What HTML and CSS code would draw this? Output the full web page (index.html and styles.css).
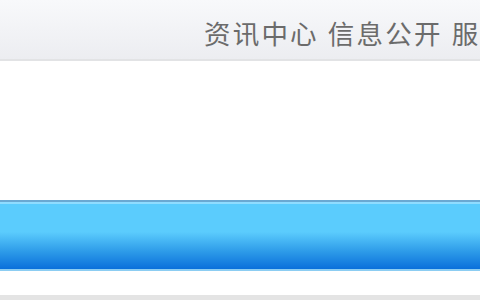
FILE: index.html
```html
<!DOCTYPE html>
<html lang="zh">
<head>
<meta charset="utf-8">
<link rel="stylesheet" href="styles.css">
</head>
<body>
<div class="page">
  <header class="top">
    <nav class="nav">
      <a class="nav-item">资讯中心</a>
      <a class="nav-item">信息公开</a>
      <a class="nav-item">服务大厅</a>
    </nav>
  </header>
  <div class="blank"></div>
  <div class="bluebar"></div>
  <div class="gap"></div>
  <div class="bottom"></div>
</div>
</body>
</html>
```
FILE: styles.css
```css
html, body {
  margin: 0;
  padding: 0;
  background: #ffffff;
  width: 480px;
  height: 300px;
  overflow: hidden;
}
.page {
  width: 480px;
  display: flex;
  flex-direction: column;
}
.top {
  height: 59px;
  background: linear-gradient(#f8f9fb, #ecedf1);
  border-bottom: 2px solid #e2e3e5;
  display: flex;
  align-items: center;
  overflow: hidden;
}
.nav {
  display: flex;
  gap: 9px;
  padding-left: 204px;
  white-space: nowrap;
  font-family: "Noto Sans CJK SC", sans-serif;
  font-size: 26.5px;
  letter-spacing: 2.2px;
  color: #6b6b6b;
  line-height: 1;
  padding-top: 7px;
}
.nav-item {
  flex: none;
}
.blank {
  height: 139px;
}
.bluebar {
  height: 67px;
  border-top: 2px solid #6aa8d2;
  border-bottom: 2px solid #8ccdf2;
  background: linear-gradient(#8fdcff 0, #8fdcff 2px, #5bccfd 2px, #5bccfd 30px, #2c9ae8 50px, #0a6fdb 67px);
}
.gap {
  height: 24px;
}
.bottom {
  height: 6px;
  background: #e4e4e4;
}
```
